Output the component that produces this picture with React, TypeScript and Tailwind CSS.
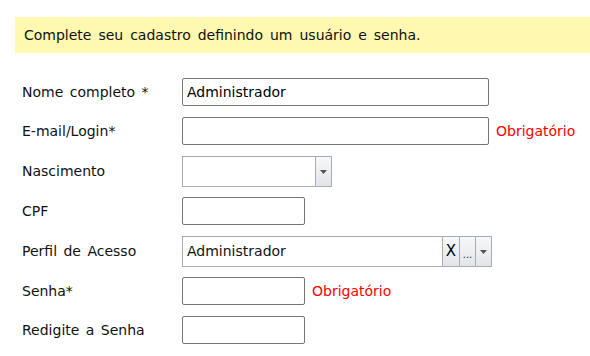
import type { ReactNode } from 'react'

function Row({ label, top, children }: { label: string; top: string; children: ReactNode }) {
  return (
    <div className={`flex items-center ${top}`}>
      <label className="w-[160px] shrink-0">{label}</label>
      {children}
    </div>
  )
}

function TextBox({ width, value = '' }: { width: string; value?: string }) {
  return (
    <input
      readOnly
      value={value}
      className={`${width} h-[28px] rounded-[2px] border border-[#767676] bg-white px-[4px] text-[14px] text-black outline-none`}
    />
  )
}

function Arrow() {
  return (
    <svg width="7" height="4" viewBox="0 0 7 4">
      <path d="M0 0h7L3.5 4z" fill="#555" />
    </svg>
  )
}

function Required() {
  return <span className="ml-[7px] text-[#ff0000]">Obrigatório</span>
}

export default function App() {
  return (
    <div className="min-h-[356px] bg-white pt-[17px] text-[14px] text-[#111] [font-family:'DejaVu_Sans',sans-serif] [word-spacing:2px]">
      <div className="ml-[15px] flex h-[36px] items-center bg-[#fff8b0] pl-[9px] [word-spacing:2.5px]">
        Complete seu cadastro definindo um usuário e senha.
      </div>

      <div className="pl-[22px]">
        <Row label="Nome completo *" top="mt-[25px]">
          <TextBox width="w-[307px]" value="Administrador" />
        </Row>
        <Row label="E-mail/Login*" top="mt-[11px]">
          <TextBox width="w-[307px]" />
          <Required />
        </Row>
        <Row label="Nascimento" top="mt-[11px]">
          <div className="flex h-[31px] w-[150px] border border-[#a5acb5] bg-white">
            <div className="flex-1" />
            <div className="flex w-[16px] items-center justify-center border-l border-[#a5acb5] bg-gradient-to-b from-[#f7f8f9] to-[#e2e5e8]">
              <Arrow />
            </div>
          </div>
        </Row>
        <Row label="CPF" top="mt-[10px]">
          <TextBox width="w-[123px]" />
        </Row>
        <Row label="Perfil de Acesso" top="mt-[11px]">
          <div className="flex h-[31px] w-[310px] border border-[#a5acb5] bg-white">
            <div className="flex flex-1 items-center px-[4px]">Administrador</div>
            <div className="flex w-[17px] items-center justify-center border-l border-[#a5acb5] bg-gradient-to-b from-[#f7f8f9] to-[#e2e5e8] text-[15px] text-black">
              X
            </div>
            <div className="flex w-[16px] items-end justify-center border-l border-[#a5acb5] bg-gradient-to-b from-[#f7f8f9] to-[#e2e5e8] pb-[6px] text-[10px] leading-none text-[#333]">
              ...
            </div>
            <div className="flex w-[16px] items-center justify-center border-l border-[#a5acb5] bg-gradient-to-b from-[#f7f8f9] to-[#e2e5e8]">
              <Arrow />
            </div>
          </div>
        </Row>
        <Row label="Senha*" top="mt-[10px]">
          <TextBox width="w-[123px]" />
          <Required />
        </Row>
        <Row label="Redigite a Senha" top="mt-[11px]">
          <TextBox width="w-[123px]" />
        </Row>
      </div>
    </div>
  )
}
